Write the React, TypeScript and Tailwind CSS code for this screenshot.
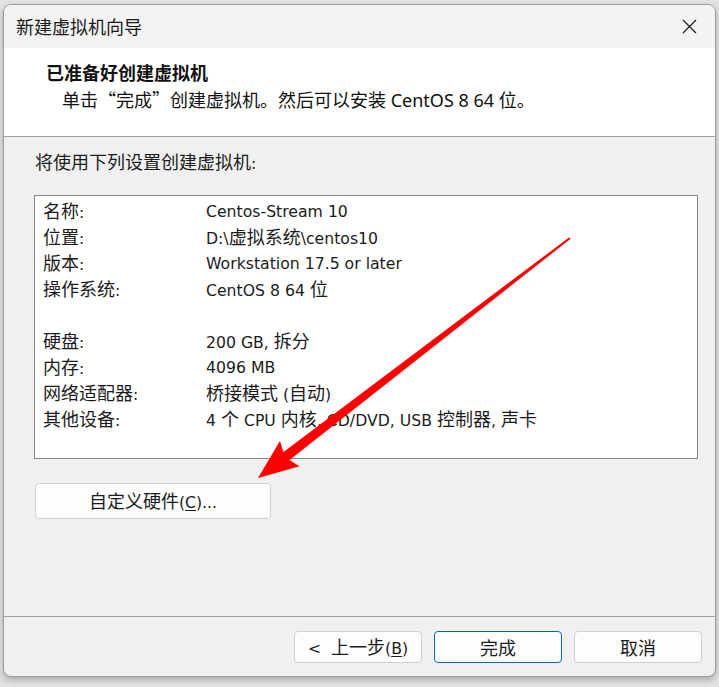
import React from "react";

const CJK_RE = /([\u2018-\u201d\u3000-\u303f\u4e00-\u9fff\uff00-\uffef]+)/;

function Mixed({ text, cjk, latin }: { text: string; cjk: string; latin: string }) {
  const parts = text.split(CJK_RE);
  return (
    <>
      {parts.map((p, i) =>
        p === "" ? null : CJK_RE.test(p) ? (
          <span key={i} className={cjk}>
            {p}
          </span>
        ) : (
          <span key={i} className={latin}>
            {p}
          </span>
        )
      )}
    </>
  );
}

const bodyCjk = "font-['Noto_Sans_CJK_SC',sans-serif] text-[18px]";
const bodyLatin = "font-['DejaVu_Sans',sans-serif] text-[15.7px]";
const uiCjk = "font-['Noto_Sans_CJK_SC',sans-serif] text-[18px]";
const uiLatin = "font-['Noto_Sans',sans-serif] text-[18px]";

const rows: ([string, string] | null)[] = [
  ["名称:", "Centos-Stream 10"],
  ["位置:", "D:\\虚拟系统\\centos10"],
  ["版本:", "Workstation 17.5 or later"],
  ["操作系统:", "CentOS 8 64 位"],
  null,
  ["硬盘:", "200 GB, 拆分"],
  ["内存:", "4096 MB"],
  ["网络适配器:", "桥接模式 (自动)"],
  ["其他设备:", "4 个 CPU 内核, CD/DVD, USB 控制器, 声卡"],
];

function Arrow() {
  return (
    <svg
      className="absolute left-0 top-0 pointer-events-none"
      width={719}
      height={687}
      viewBox="0 0 719 687"
    >
      <polygon
        fill="#ff0000"
        points="570.6,238.8 289.5,460.1 299.5,466.3 258,478 279.9,440.9 283.5,452.1 569.4,237.2"
      />
    </svg>
  );
}

export default function App() {
  return (
    <div className="relative w-[719px] h-[687px] bg-[#e2e2e2] pt-[4px] pl-[3px] overflow-hidden">
      <div className="w-[713px] h-[673px] flex flex-col rounded-[8px] border border-[#9c9c9c] bg-[#f0f0f0] overflow-hidden shadow-[0_3px_6px_rgba(0,0,0,0.25)]">
        {/* title bar */}
        <div className="h-[43px] shrink-0 flex items-center justify-between bg-[#f3f3f3] pl-[12px] pr-[18px] text-[#1a1a1a]">
          <div className="leading-none">
            <Mixed text="新建虚拟机向导" cjk={uiCjk} latin={uiLatin} />
          </div>
          <svg width="15" height="15" viewBox="0 0 15 15">
            <path d="M1 1 L14 14 M14 1 L1 14" stroke="#1a1a1a" strokeWidth="1.2" fill="none" />
          </svg>
        </div>
        {/* header */}
        <div className="h-[89px] shrink-0 bg-white border-b border-[#a0a0a0] text-[#111] pt-[12px]">
          <div className="pl-[42px] h-[24px] leading-[24px] font-bold whitespace-nowrap">
            <Mixed text="已准备好创建虚拟机" cjk={uiCjk + " font-bold"} latin={uiLatin} />
          </div>
          <div className="pl-[58px] mt-[3px] h-[24px] leading-[24px] whitespace-nowrap">
            <Mixed
              text="单击“完成”创建虚拟机。然后可以安装 CentOS 8 64 位。"
              cjk={uiCjk}
              latin={uiLatin}
            />
          </div>
        </div>
        {/* body */}
        <div className="h-[480px] shrink-0 border-b border-[#a0a0a0] pt-[12px] text-[#1b1b1b]">
          <div className="pl-[31px] h-[24px] leading-[24px] whitespace-nowrap">
            <Mixed text="将使用下列设置创建虚拟机:" cjk={bodyCjk} latin={bodyLatin} />
          </div>
          <div className="ml-[30px] mt-[22px] w-[664px] h-[264px] bg-white border border-[#828790] pt-[2px] pl-[8px]">
            {rows.map((r, i) => (
              <div key={i} className="h-[26px] flex items-center whitespace-nowrap">
                {r && (
                  <>
                    <div className="w-[163px] shrink-0">
                      <Mixed text={r[0]} cjk={bodyCjk} latin={bodyLatin} />
                    </div>
                    <div>
                      <Mixed text={r[1]} cjk={bodyCjk} latin={bodyLatin} />
                    </div>
                  </>
                )}
              </div>
            ))}
          </div>
          <div className="ml-[31px] mt-[24px] w-[236px] h-[36px] rounded-[4px] border border-[#d0d0d0] bg-[#fdfdfd] flex items-center justify-center">
            <span className="whitespace-pre">
              <span className={bodyCjk}>自定义硬件</span>
              <span className={bodyLatin}>
                (<span className="underline underline-offset-2">C</span>)...
              </span>
            </span>
          </div>
        </div>
        {/* footer */}
        <div className="flex-1 flex justify-end items-start pt-[14px] pr-[13px] gap-[12px] text-[#1b1b1b]">
          <div className="w-[128px] h-[32px] rounded-[4px] border border-[#d0d0d0] bg-[#fdfdfd] flex items-center justify-center">
            <span className="whitespace-pre">
              <span className={bodyLatin}>{"<  "}</span>
              <span className={bodyCjk}>上一步</span>
              <span className={bodyLatin}>
                (<span className="underline underline-offset-2">B</span>)
              </span>
            </span>
          </div>
          <div className="w-[128px] h-[32px] rounded-[4px] border border-[#0067c0] bg-[#fdfdfd] flex items-center justify-center">
            <span className={bodyCjk}>完成</span>
          </div>
          <div className="w-[128px] h-[32px] rounded-[4px] border border-[#d0d0d0] bg-[#fdfdfd] flex items-center justify-center">
            <span className={bodyCjk}>取消</span>
          </div>
        </div>
      </div>
      <Arrow />
    </div>
  );
}
